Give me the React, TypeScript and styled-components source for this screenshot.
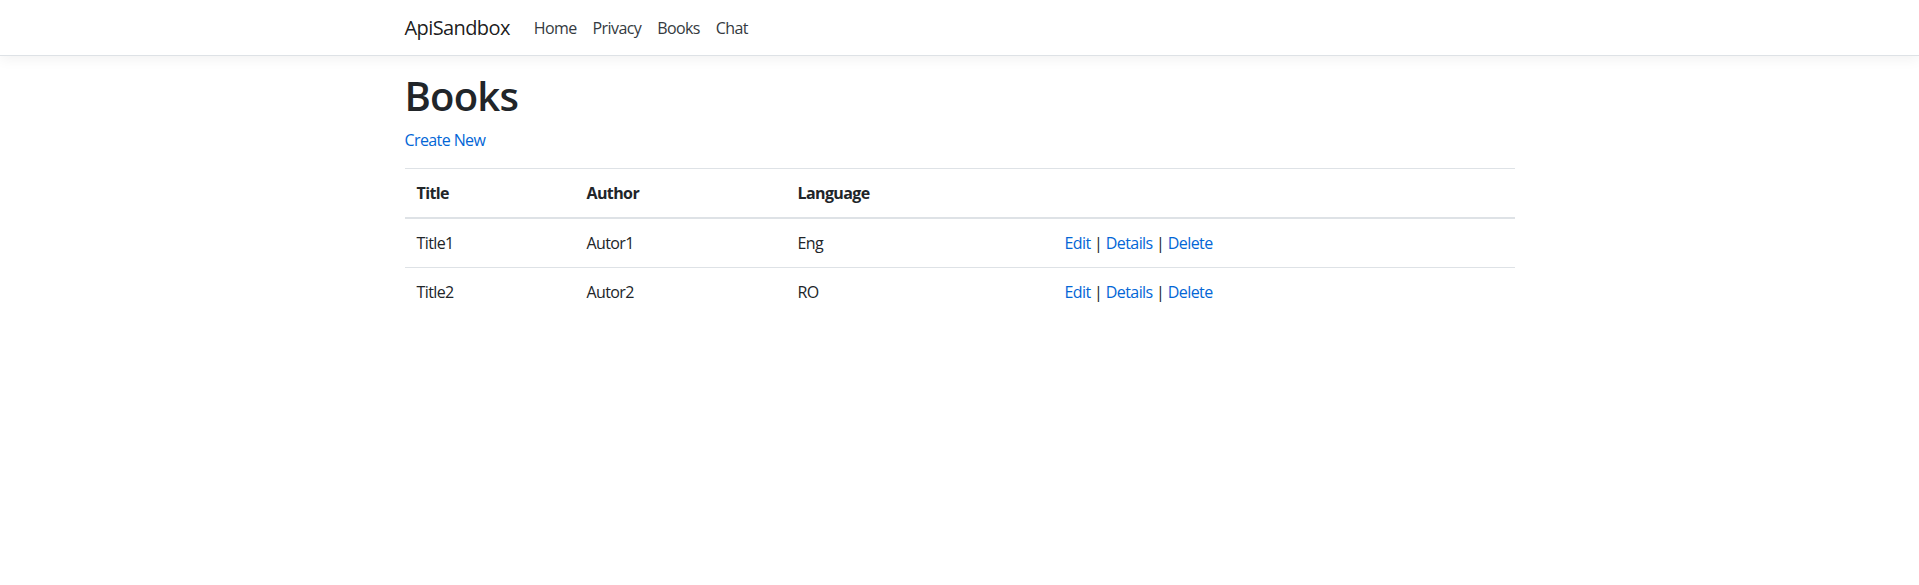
import React from 'react';
import styled, { createGlobalStyle } from 'styled-components';

const GlobalStyle = createGlobalStyle`
  html, body {
    margin: 0;
    padding: 0;
    background: #fff;
  }
  body {
    font-family: "Open Sans", "Noto Sans", Roboto, sans-serif;
    font-size: 16px;
    line-height: 1.5;
    letter-spacing: -0.6px;
    color: #212529;
  }
`;

const Header = styled.header`
  background: #fff;
  border-bottom: 1px solid #dee2e6;
  box-shadow: 0 0.25rem 0.75rem rgba(0, 0, 0, 0.05);
  margin-bottom: 16px;
`;

const NavContainer = styled.nav`
  max-width: 1140px;
  margin: 0 auto;
  padding: 0 15px;
  box-sizing: border-box;
  height: 55px;
  display: flex;
  align-items: center;
`;

const Brand = styled.a`
  font-size: 20px;
  line-height: 30px;
  color: rgba(0, 0, 0, 0.9);
  text-decoration: none;
  margin-right: 16px;
`;

const NavList = styled.ul`
  display: flex;
  list-style: none;
  margin: 0;
  padding: 0;
`;

const NavLink = styled.a`
  display: block;
  padding: 8px;
  color: #343a40;
  text-decoration: none;
  font-size: 16px;
`;

const Main = styled.main`
  max-width: 1140px;
  margin: 0 auto;
  padding: 0 15px 16px;
  box-sizing: border-box;
`;

const Title = styled.h1`
  font-size: 40px;
  font-weight: 600;
  line-height: 1.2;
  letter-spacing: -0.8px;
  margin: 0 0 8px;
`;

const Link = styled.a`
  color: #0366d6;
  text-decoration: none;
`;

const Para = styled.p`
  margin: 0 0 16px;
`;

const Table = styled.table`
  width: 100%;
  border-collapse: collapse;
  margin-bottom: 16px;
`;

const HeadCell = styled.th<{ $w: number }>`
  width: ${(p) => p.$w}px;
  text-align: left;
  font-weight: 700;
  padding: 12px;
  border-top: 1px solid #dee2e6;
  border-bottom: 2px solid #dee2e6;
  vertical-align: bottom;
`;

const Cell = styled.td`
  padding: 12px;
  border-top: 1px solid #dee2e6;
  vertical-align: top;
`;

const books = [
  { title: 'Title1', author: 'Autor1', language: 'Eng' },
  { title: 'Title2', author: 'Autor2', language: 'RO' },
];

export default function App() {
  return (
    <>
      <GlobalStyle />
      <Header>
        <NavContainer>
          <Brand href="#">ApiSandbox</Brand>
          <NavList>
            {['Home', 'Privacy', 'Books', 'Chat'].map((item) => (
              <li key={item}>
                <NavLink href="#">{item}</NavLink>
              </li>
            ))}
          </NavList>
        </NavContainer>
      </Header>
      <Main>
        <Title>Books</Title>
        <Para>
          <Link href="#">Create New</Link>
        </Para>
        <Table>
          <thead>
            <tr>
              <HeadCell $w={146}>Title</HeadCell>
              <HeadCell $w={187}>Author</HeadCell>
              <HeadCell $w={243}>Language</HeadCell>
              <HeadCell $w={438}></HeadCell>
            </tr>
          </thead>
          <tbody>
            {books.map((b) => (
              <tr key={b.title}>
                <Cell>{b.title}</Cell>
                <Cell>{b.author}</Cell>
                <Cell>{b.language}</Cell>
                <Cell>
                  <Link href="#">Edit</Link> | <Link href="#">Details</Link> |{' '}
                  <Link href="#">Delete</Link>
                </Cell>
              </tr>
            ))}
          </tbody>
        </Table>
      </Main>
    </>
  );
}
